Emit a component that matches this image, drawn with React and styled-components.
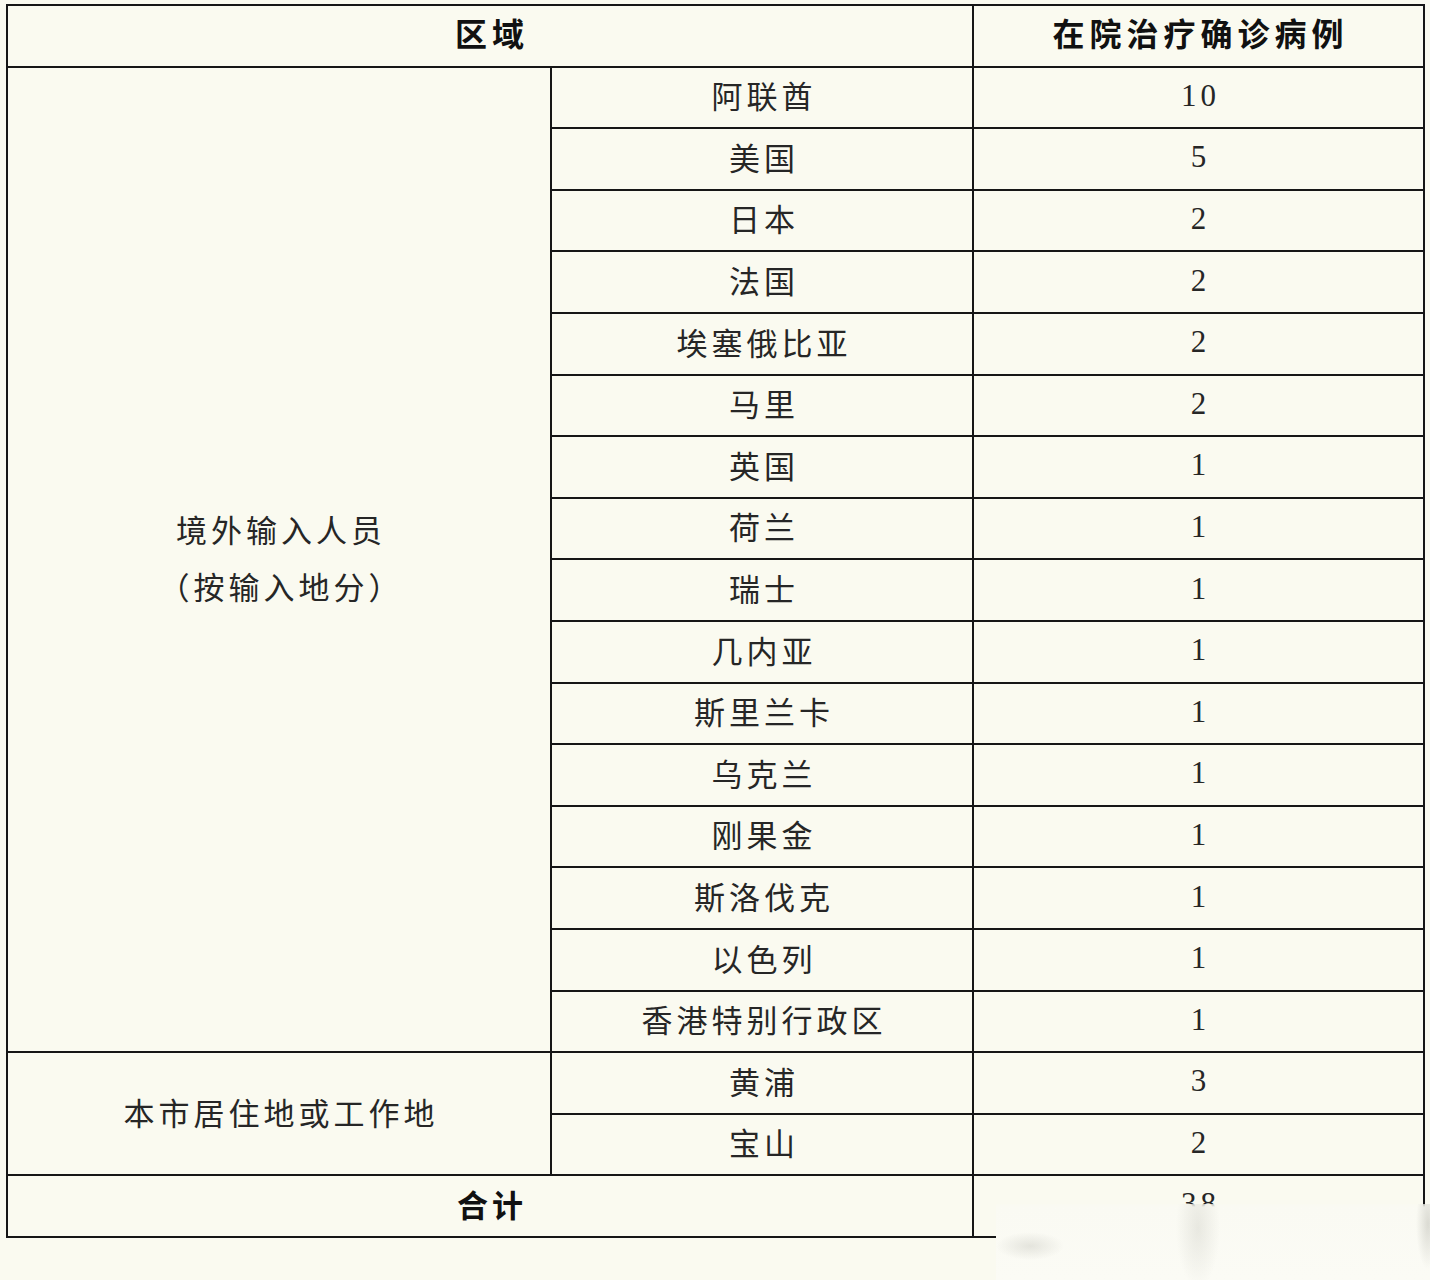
import React from "react";
import styled, { createGlobalStyle } from "styled-components";

const Global = createGlobalStyle`
  html, body {
    margin: 0;
    padding: 0;
    background: #fafaf0;
  }
  body {
    font-family: "Liberation Serif", "Noto Sans CJK SC", serif;
    color: #1e1e1e;
  }
`;

const Page = styled.div`
  position: relative;
  width: 1430px;
  height: 1280px;
  padding: 4px 0 0 6px;
  box-sizing: border-box;
  overflow: hidden;
`;

const Table = styled.table`
  border-collapse: collapse;
  table-layout: fixed;
  width: 1417px;
  background: #fafaf0;
`;

const Row = styled.tr`
  height: 61.6px;
`;

const Cell = styled.td`
  border: 2px solid #161616;
  padding: 0 0 ${(p) => (p.$num ? "4px" : "5px")} 4px;
  text-align: center;
  vertical-align: middle;
  font-family: ${(p) =>
    p.$num ? '"Liberation Serif", serif' : '"Noto Sans CJK SC", sans-serif'};
  font-size: 31px;
  font-weight: ${(p) => (p.$bold ? 700 : 400)};
  letter-spacing: 4px;
  line-height: ${(p) => (p.$multi ? "57px" : "1.2")};
  color: ${(p) => (p.$bold ? "#111" : "#262626")};
  white-space: nowrap;
`;

const HeadCell = styled(Cell).attrs({ as: "th" })`
  font-family: "Noto Sans CJK SC", sans-serif;
  font-size: 32px;
  font-weight: 700;
  letter-spacing: 5px;
  color: #111;
  padding-bottom: 7px;
`;

const Watermark = styled.div`
  position: absolute;
  left: 996px;
  top: 1204px;
  right: 0;
  bottom: 0;
  background:
    radial-gradient(ellipse 34px 14px at 34px 42px, rgba(170, 170, 160, 0.28), rgba(170, 170, 160, 0) 100%),
    radial-gradient(ellipse 22px 60px at 202px 24px, rgba(180, 180, 170, 0.26), rgba(180, 180, 170, 0) 100%),
    radial-gradient(ellipse 12px 45px at 432px 20px, rgba(160, 160, 150, 0.35), rgba(160, 160, 150, 0) 100%),
    linear-gradient(to bottom, rgba(250, 250, 242, 0.7) 0px, #fafaf3 3px, #fbfbf5 100%);
`;

const foreign = [
  ["阿联酋", 10],
  ["美国", 5],
  ["日本", 2],
  ["法国", 2],
  ["埃塞俄比亚", 2],
  ["马里", 2],
  ["英国", 1],
  ["荷兰", 1],
  ["瑞士", 1],
  ["几内亚", 1],
  ["斯里兰卡", 1],
  ["乌克兰", 1],
  ["刚果金", 1],
  ["斯洛伐克", 1],
  ["以色列", 1],
  ["香港特别行政区", 1],
];

const local = [
  ["黄浦", 3],
  ["宝山", 2],
];

export default function App() {
  return (
    <>
      <Global />
      <Page>
        <Table>
          <colgroup>
            <col style={{ width: "544px" }} />
            <col style={{ width: "422px" }} />
            <col style={{ width: "451px" }} />
          </colgroup>
          <thead>
            <Row>
              <HeadCell colSpan={2}>区域</HeadCell>
              <HeadCell>在院治疗确诊病例</HeadCell>
            </Row>
          </thead>
          <tbody>
            {foreign.map(([name, n], i) => (
              <Row key={name}>
                {i === 0 && (
                  <Cell rowSpan={foreign.length} $multi>
                    境外输入人员
                    <br />
                    （按输入地分）
                  </Cell>
                )}
                <Cell>{name}</Cell>
                <Cell $num>{n}</Cell>
              </Row>
            ))}
            {local.map(([name, n], i) => (
              <Row key={name}>
                {i === 0 && <Cell rowSpan={local.length}>本市居住地或工作地</Cell>}
                <Cell>{name}</Cell>
                <Cell $num>{n}</Cell>
              </Row>
            ))}
            <Row>
              <Cell colSpan={2} $bold>
                合计
              </Cell>
              <Cell $num>38</Cell>
            </Row>
          </tbody>
        </Table>
        <Watermark />
      </Page>
    </>
  );
}
